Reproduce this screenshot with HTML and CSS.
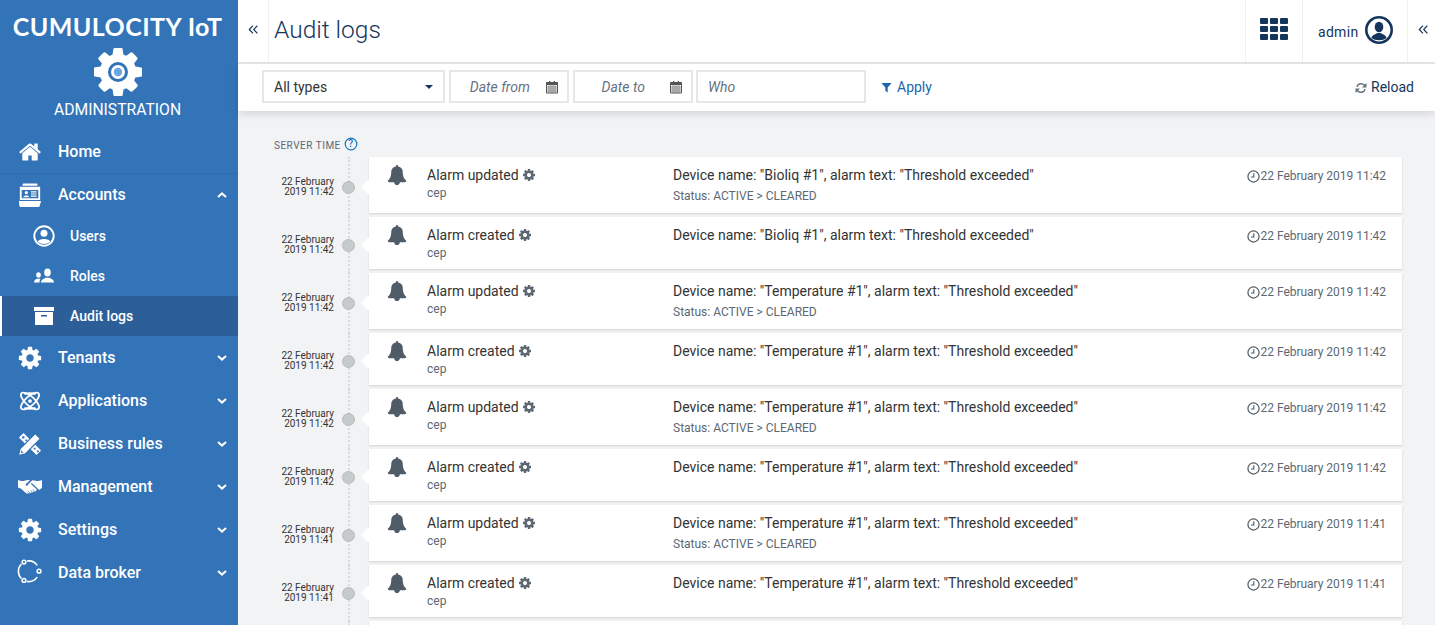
FILE: index.html
```html
<!DOCTYPE html>
<html lang="en">

<head>
    <meta charset="UTF-8">
    <title>Audit logs</title>
    <link rel="stylesheet" href="styles.css">
</head>

<body>
    <svg class="defs" width="0" height="0">
        <symbol id="i-cog" viewBox="0 0 1792 1792"><path d="M1152 896q0-106-75-181t-181-75-181 75-75 181 75 181 181 75 181-75 75-181zm512-109v222q0 12-8 23t-20 13l-185 28q-19 54-39 91 35 50 107 138 10 12 10 25t-9 23q-27 37-99 108t-94 71q-12 0-26-9l-138-108q-44 23-91 38-16 136-29 186-7 28-36 28h-222q-14 0-24.5-8.5t-11.5-21.5l-28-184q-49-16-90-37l-141 107q-10 9-25 9-14 0-25-11-126-114-165-168-7-10-7-23 0-12 8-23 15-21 51-66.5t54-70.5q-27-50-41-99l-183-27q-13-2-21-12.5t-8-23.5v-222q0-12 8-23t19-13l186-28q14-46 39-92-40-57-107-138-10-12-10-24 0-10 9-23 26-36 98.5-107.5t94.5-71.5q13 0 26 10l138 107q44-23 91-38 16-136 29-186 7-28 36-28h222q14 0 24.5 8.5t11.5 21.5l28 184q49 16 90 37l142-107q9-9 24-9 13 0 25 10 129 119 165 170 7 8 7 22 0 12-8 23-15 21-51 66.5t-54 70.5q26 50 41 98l183 28q13 2 21 12.5t8 23.5z"/></symbol>
        <symbol id="i-bell" viewBox="0 0 1792 1792"><path d="M1728 1408q0 52-38 90t-90 38h-448q0 106-75 181t-181 75-181-75-75-181h-448q-52 0-90-38t-38-90q50-42 91-88t85-119.5 74.5-158.5 50-206 19.5-260q0-152 117-282.5t307-158.5q-8-19-8-39 0-40 28-68t68-28 68 28 28 68q0 20-8 39 190 28 307 158.5t117 282.5q0 139 19.5 260t50 206 74.5 158.5 85 119.5 91 88z"/></symbol>
        <symbol id="i-home" viewBox="0 0 1792 1792"><path d="M1472 992v480q0 26-19 45t-45 19h-384v-384h-256v384h-384q-26 0-45-19t-19-45v-480q0-1 .5-3t.5-3l575-474 575 474q1 2 1 6zm223-69l-62 74q-8 9-21 11h-3q-13 0-21-7l-692-577-692 577q-12 8-24 7-13-2-21-11l-62-74q-8-10-7-23.5t11-21.5l719-599q32-26 76-26t76 26l244 204v-195q0-14 9-23t23-9h192q14 0 23 9t9 23v408l219 182q10 8 11 21.5t-7 23.5z"/></symbol>
        <symbol id="i-clock" viewBox="0 0 14 14"><circle cx="7" cy="7" r="6" fill="none" stroke="currentColor" stroke-width="1.300"/><path d="M7.300 3.400v4.100H4.400" fill="none" stroke="currentColor" stroke-width="1.200"/></symbol>
        <symbol id="i-cal" viewBox="0 0 14 14"><path d="M1.500 2.500h11v10.500h-11z" fill="none" stroke="currentColor"/><path d="M1.500 2.500h11v2.500h-11zM4 1h1.300v2.400H4zM8.700 1H10v2.400H8.700z"/><path d="M1.500 7h11M1.500 9h11M1.500 11h11M4 5v8M6 5v8M8 5v8M10 5v8" stroke="currentColor" stroke-width=".6" fill="none"/></symbol>
        <symbol id="i-down" viewBox="0 0 10 6"><path d="M1 1l4 3.600L9 1" fill="none" stroke="currentColor" stroke-width="2"/></symbol>
        <symbol id="i-dbl" viewBox="0 0 10 10"><path d="M4.500 1.500L1.200 5l3.300 3.500M8.500 1.500L5.200 5l3.300 3.500" fill="none" stroke="currentColor" stroke-width="1.100"/></symbol>
    </svg>

    <div class="app">
        <aside class="sidebar">
            <div class="brand">
                <div class="brand-name">CUMULOCITY IoT</div>
                <svg class="brand-cog" viewBox="0 0 48 48">
                    <use href="#i-cog" width="56" height="56" x="-4" y="-4" fill="#fff"/>
                    <circle cx="24" cy="24" r="10" fill="#3373b7"/>
                    <circle cx="24" cy="24" r="7" fill="#fff"/>
                    <circle cx="24" cy="24" r="4.200" fill="#6da6e2"/>
                </svg>
                <div class="brand-app">ADMINISTRATION</div>
            </div>
            <nav class="nav">
                <a class="nav-item">
                    <svg class="nav-icon"><use href="#i-home"/></svg>
                    <span class="nav-label">Home</span>
                </a>
                <a class="nav-item nav-item-line">
                    <svg class="nav-icon" viewBox="0 0 26 26"><path d="M5 1.500c0-.5.500-1 1-1h14c.5 0 1 .5 1 1V3H5z"/><path d="M2 4h22v14.500H2zM4 7.500v9h18v-9z" fill-rule="evenodd"/><circle cx="9" cy="10.500" r="1.700"/><path d="M5.800 15.500c0-2.600 6.400-2.600 6.400 0zM14 9h6v1.200h-6zM14 11.300h6v1.200h-6zM14 13.600h6v1.200h-6z"/><path d="M1 19.500h24l-1.500 5.500c0 .5-.5 1-1 1h-20c-.5 0-1-.5-1-1z"/></svg>
                    <span class="nav-label">Accounts</span>
                    <svg class="nav-arrow nav-arrow-up"><use href="#i-down"/></svg>
                </a>
                <a class="sub-item">
                    <svg class="sub-icon" viewBox="0 0 22 22"><circle cx="11" cy="11" r="9.700" fill="none" stroke="#fff" stroke-width="1.900"/><circle cx="11" cy="8.200" r="3.500"/><path d="M4.800 16.800c.6-3.600 11.800-3.600 12.400 0-3 3-9.400 3-12.400 0z"/></svg>
                    <span>Users</span>
                </a>
                <a class="sub-item">
                    <svg class="sub-icon" viewBox="0 0 22 22"><ellipse cx="14.500" cy="7.500" rx="3.300" ry="4"/><path d="M8 17.500c0-2.800 2.500-3.500 4.500-4.800h4c2 1.300 4.500 2 4.500 4.800z"/><ellipse cx="5.500" cy="10" rx="2.300" ry="2.800"/><path d="M1 17.500c0-2.200 1.500-3 3-3.800h3.500C6.800 14.500 6.500 16 6.500 17.500z"/></svg>
                    <span>Roles</span>
                </a>
                <a class="sub-item sub-item-active">
                    <svg class="sub-icon" viewBox="0 0 22 22"><path d="M1 2h20v4H1z"/><path d="M2 7h18v13H2zM8 10v1.500h6V10z" fill-rule="evenodd"/></svg>
                    <span>Audit logs</span>
                </a>
                <a class="nav-item">
                    <svg class="nav-icon nav-icon-cog"><use href="#i-cog"/></svg>
                    <span class="nav-label">Tenants</span>
                    <svg class="nav-arrow"><use href="#i-down"/></svg>
                </a>
                <a class="nav-item">
                    <svg class="nav-icon" viewBox="0 0 26 26"><g fill="none" stroke="#fff" stroke-width="1.900"><ellipse cx="13" cy="13" rx="12.500" ry="5" transform="rotate(42 13 13)"/><ellipse cx="13" cy="13" rx="12.500" ry="5" transform="rotate(-42 13 13)"/></g><path d="M7 20.500a12 8 0 0 0 12 0M7 5.500a12 8 0 0 1 12 0" fill="none" stroke="#fff" stroke-width="1.900"/><circle cx="13" cy="13" r="2"/></svg>
                    <span class="nav-label">Applications</span>
                    <svg class="nav-arrow"><use href="#i-down"/></svg>
                </a>
                <a class="nav-item">
                    <svg class="nav-icon" viewBox="0 0 26 26"><path d="M1 6l5-5 6.500 6.500-5 5zM13.500 18.500l5-5 6.500 6.500-5 5z"/><path d="M4.500 4.500h2.500V7H4.500zM8 8h2v2H8zM17 17h2v2h-2zM20.500 20h2v2h-2z" fill="#3373b7"/><path d="M.5 25.500l1.800-7.300L18.700 1.800l5.500 5.500L7.800 23.700z" stroke="#3373b7" stroke-width="1.200"/><path d="M3 22.800l.7-3 2.300 2.300z" fill="#3373b7"/></svg>
                    <span class="nav-label">Business rules</span>
                    <svg class="nav-arrow"><use href="#i-down"/></svg>
                </a>
                <a class="nav-item">
                    <svg class="nav-icon" viewBox="0 0 26 22"><path d="M0 3.500c3 1 5 1.500 7 .8 2-.8 4-1.300 6-.5l-4.500 4c-1 1.200.8 2.500 2 1.700l3-2.200 7 6.500-1 1.500c-.8.900-2 .9-2.600.3-.3 1.200-1.600 1.700-2.600 1-.4 1.100-1.700 1.500-2.700.8-.7.800-2 .9-3 .1L3 12.500 0 11.500z"/><path d="M26 3.500c-3 1-5 1.500-7 .8-1.500-.6-2.500-.8-3.500-.7L10 9c.5.600 1.500.3 2-.2l3-2 8 7.500 3-2.500z"/><path d="M11 15.500l2 2M13.500 14.500l2.500 2.500M16 13.500l2.500 2.500" stroke="#3373b7" stroke-width=".8" fill="none"/></svg>
                    <span class="nav-label">Management</span>
                    <svg class="nav-arrow"><use href="#i-down"/></svg>
                </a>
                <a class="nav-item">
                    <svg class="nav-icon nav-icon-cog"><use href="#i-cog"/></svg>
                    <span class="nav-label">Settings</span>
                    <svg class="nav-arrow"><use href="#i-down"/></svg>
                </a>
                <a class="nav-item">
                    <svg class="nav-icon nav-icon-open" viewBox="0 0 26 26"><g fill="none" stroke="#fff" stroke-width="1.700"><path d="M9.700 .1A11.200 11.200 0 0 1 20.800 4.700M20.800 17.500A11.200 11.200 0 0 1 9.700 22.100M3.700 19A11.200 11.200 0 0 1 3.700 3.200"/><circle cx="6.500" cy="1.200" r="2"/><circle cx="22.800" cy="11" r="2"/><circle cx="6.500" cy="21" r="2"/></g></svg>
                    <span class="nav-label">Data broker</span>
                    <svg class="nav-arrow"><use href="#i-down"/></svg>
                </a>
            </nav>
        </aside>

        <main class="main">
            <header class="topbar">
                <div class="collapse-left"><svg class="dbl"><use href="#i-dbl"/></svg></div>
                <h1 class="title">Audit logs</h1>
                <div class="apps-cell">
                    <svg class="apps" viewBox="0 0 28 22">
                        <rect x="0" y="0" width="8" height="6" rx="1"/><rect x="10" y="0" width="8" height="6" rx="1"/><rect x="20" y="0" width="8" height="6" rx="1"/>
                        <rect x="0" y="8" width="8" height="6" rx="1"/><rect x="10" y="8" width="8" height="6" rx="1"/><rect x="20" y="8" width="8" height="6" rx="1"/>
                        <rect x="0" y="16" width="8" height="6" rx="1"/><rect x="10" y="16" width="8" height="6" rx="1"/><rect x="20" y="16" width="8" height="6" rx="1"/>
                    </svg>
                </div>
                <div class="user-cell">
                    <span class="user-name">admin</span>
                    <svg class="avatar" viewBox="0 0 28 28"><circle cx="14" cy="14" r="12.700" fill="none" stroke="#14365c" stroke-width="2.600"/><ellipse cx="14" cy="11" rx="4.300" ry="5.300" fill="#14365c"/><path d="M6.500 22c.5-3.500 4.500-3.500 5.500-5h4c1 1.500 5 1.500 5.500 5-3.500 3-11.500 3-15 0z" fill="#14365c"/></svg>
                </div>
                <div class="collapse-right"><svg class="dbl"><use href="#i-dbl"/></svg></div>
            </header>

            <div class="filters">
                <div class="field field-select">
                    <span class="select-value">All types</span>
                    <span class="caret"></span>
                </div>
                <div class="field field-date">
                    <span class="placeholder">Date from</span>
                    <svg class="cal"><use href="#i-cal"/></svg>
                </div>
                <div class="field field-date">
                    <span class="placeholder">Date to</span>
                    <svg class="cal"><use href="#i-cal"/></svg>
                </div>
                <div class="field field-who"><span class="placeholder">Who</span></div>
                <a class="apply">
                    <svg class="apply-icon" viewBox="0 0 12 12"><path d="M.5 1h11L7.300 6v5.500L4.700 9.500V6z"/></svg>
                    Apply
                </a>
                <a class="reload">
                    <svg class="reload-icon" viewBox="0 0 14 14"><path d="M2.200 5.800A5 5 0 0 1 10.800 3.600L12.500 2v4.500H8l1.800-1.800A3.500 3.500 0 0 0 3.700 6zM11.800 8.200A5 5 0 0 1 3.200 10.400L1.500 12V7.500H6L4.200 9.300A3.500 3.500 0 0 0 10.300 8z"/></svg>
                    Reload
                </a>
            </div>

            <section class="content">
                <div class="server-time">
                    Server time
                    <svg class="help" viewBox="0 0 14 14"><circle cx="7" cy="7" r="5.800" fill="none" stroke="#1776bf" stroke-width="1.200"/><text x="7" y="10" text-anchor="middle" class="help-mark">?</text></svg>
                </div>

                <div class="row">
                    <div class="stamp">22 February<br>2019 11:42</div>
                    <div class="dot"></div>
                    <div class="card">
                        <svg class="bell"><use href="#i-bell"/></svg>
                        <div class="who-col">
                            <div class="action">Alarm updated <svg class="mini-cog"><use href="#i-cog"/></svg></div>
                            <div class="user">cep</div>
                        </div>
                        <div class="msg-col">
                            <div class="msg">Device name: "Bioliq #1", alarm text: "Threshold exceeded"</div>
                            <div class="status">Status: ACTIVE &gt; CLEARED</div>
                        </div>
                        <div class="when"><svg class="clock"><use href="#i-clock"/></svg>22 February 2019 11:42</div>
                    </div>
                </div>

                <div class="row">
                    <div class="stamp">22 February<br>2019 11:42</div>
                    <div class="dot"></div>
                    <div class="card">
                        <svg class="bell"><use href="#i-bell"/></svg>
                        <div class="who-col">
                            <div class="action">Alarm created <svg class="mini-cog"><use href="#i-cog"/></svg></div>
                            <div class="user">cep</div>
                        </div>
                        <div class="msg-col">
                            <div class="msg">Device name: "Bioliq #1", alarm text: "Threshold exceeded"</div>
                        </div>
                        <div class="when"><svg class="clock"><use href="#i-clock"/></svg>22 February 2019 11:42</div>
                    </div>
                </div>

                <div class="row">
                    <div class="stamp">22 February<br>2019 11:42</div>
                    <div class="dot"></div>
                    <div class="card">
                        <svg class="bell"><use href="#i-bell"/></svg>
                        <div class="who-col">
                            <div class="action">Alarm updated <svg class="mini-cog"><use href="#i-cog"/></svg></div>
                            <div class="user">cep</div>
                        </div>
                        <div class="msg-col">
                            <div class="msg">Device name: "Temperature #1", alarm text: "Threshold exceeded"</div>
                            <div class="status">Status: ACTIVE &gt; CLEARED</div>
                        </div>
                        <div class="when"><svg class="clock"><use href="#i-clock"/></svg>22 February 2019 11:42</div>
                    </div>
                </div>

                <div class="row">
                    <div class="stamp">22 February<br>2019 11:42</div>
                    <div class="dot"></div>
                    <div class="card">
                        <svg class="bell"><use href="#i-bell"/></svg>
                        <div class="who-col">
                            <div class="action">Alarm created <svg class="mini-cog"><use href="#i-cog"/></svg></div>
                            <div class="user">cep</div>
                        </div>
                        <div class="msg-col">
                            <div class="msg">Device name: "Temperature #1", alarm text: "Threshold exceeded"</div>
                        </div>
                        <div class="when"><svg class="clock"><use href="#i-clock"/></svg>22 February 2019 11:42</div>
                    </div>
                </div>

                <div class="row">
                    <div class="stamp">22 February<br>2019 11:42</div>
                    <div class="dot"></div>
                    <div class="card">
                        <svg class="bell"><use href="#i-bell"/></svg>
                        <div class="who-col">
                            <div class="action">Alarm updated <svg class="mini-cog"><use href="#i-cog"/></svg></div>
                            <div class="user">cep</div>
                        </div>
                        <div class="msg-col">
                            <div class="msg">Device name: "Temperature #1", alarm text: "Threshold exceeded"</div>
                            <div class="status">Status: ACTIVE &gt; CLEARED</div>
                        </div>
                        <div class="when"><svg class="clock"><use href="#i-clock"/></svg>22 February 2019 11:42</div>
                    </div>
                </div>

                <div class="row">
                    <div class="stamp">22 February<br>2019 11:42</div>
                    <div class="dot"></div>
                    <div class="card">
                        <svg class="bell"><use href="#i-bell"/></svg>
                        <div class="who-col">
                            <div class="action">Alarm created <svg class="mini-cog"><use href="#i-cog"/></svg></div>
                            <div class="user">cep</div>
                        </div>
                        <div class="msg-col">
                            <div class="msg">Device name: "Temperature #1", alarm text: "Threshold exceeded"</div>
                        </div>
                        <div class="when"><svg class="clock"><use href="#i-clock"/></svg>22 February 2019 11:42</div>
                    </div>
                </div>

                <div class="row">
                    <div class="stamp">22 February<br>2019 11:41</div>
                    <div class="dot"></div>
                    <div class="card">
                        <svg class="bell"><use href="#i-bell"/></svg>
                        <div class="who-col">
                            <div class="action">Alarm updated <svg class="mini-cog"><use href="#i-cog"/></svg></div>
                            <div class="user">cep</div>
                        </div>
                        <div class="msg-col">
                            <div class="msg">Device name: "Temperature #1", alarm text: "Threshold exceeded"</div>
                            <div class="status">Status: ACTIVE &gt; CLEARED</div>
                        </div>
                        <div class="when"><svg class="clock"><use href="#i-clock"/></svg>22 February 2019 11:41</div>
                    </div>
                </div>

                <div class="row">
                    <div class="stamp">22 February<br>2019 11:41</div>
                    <div class="dot"></div>
                    <div class="card">
                        <svg class="bell"><use href="#i-bell"/></svg>
                        <div class="who-col">
                            <div class="action">Alarm created <svg class="mini-cog"><use href="#i-cog"/></svg></div>
                            <div class="user">cep</div>
                        </div>
                        <div class="msg-col">
                            <div class="msg">Device name: "Temperature #1", alarm text: "Threshold exceeded"</div>
                        </div>
                        <div class="when"><svg class="clock"><use href="#i-clock"/></svg>22 February 2019 11:41</div>
                    </div>
                </div>

                <div class="row">
                    <div class="stamp"></div>
                    <div class="dot dot-hidden"></div>
                    <div class="card"></div>
                </div>
            </section>
        </main>
    </div>
</body>

</html>
```

FILE: styles.css
```css
* {
    box-sizing: border-box;
}

html,
body {
    margin: 0;
    height: 100%;
    overflow: hidden;
}

body {
    font-family: Roboto, "Liberation Sans", sans-serif;
    font-size: 14px;
    color: #333;
    background: #f2f3f5;
}

.defs {
    position: absolute;
}

.app {
    display: flex;
    height: 625px;
}

/* sidebar */
.sidebar {
    width: 238px;
    flex: none;
    background: #3373b7;
    color: #fff;
}

.brand {
    height: 130px;
    padding: 13px 3px 0 0;
    display: flex;
    flex-direction: column;
    align-items: center;
}

.brand-name {
    font-family: Lato, sans-serif;
    font-weight: 700;
    font-size: 25px;
    line-height: 27px;
    white-space: nowrap;
    letter-spacing: .45px;
}

.brand-cog {
    width: 48px;
    height: 48px;
    margin-top: 8px;
}

.brand-app {
    font-size: 15.7px;
    line-height: 20px;
    margin-top: 4px;
}

.nav-item {
    height: 43px;
    display: flex;
    align-items: center;
    padding-left: 18px;
}

.nav-item-line {
    box-shadow: inset 0 1px 0 #2f6cad;
}

.nav-icon {
    width: 24px;
    height: 24px;
    fill: #fff;
    flex: none;
}

.nav-icon-cog {
    width: 26px;
    height: 26px;
    margin: 0 -1px;
}

.nav-icon-open {
    overflow: visible;
}

.nav-label {
    margin-left: 16px;
    font-size: 16px;
    font-weight: 500;
    flex: 1;
}

.nav-arrow {
    width: 10px;
    height: 6px;
    margin-right: 11px;
    color: #fff;
}

.nav-arrow-up {
    transform: rotate(180deg);
}

.sub-item {
    height: 40px;
    display: flex;
    align-items: center;
    gap: 15px;
    padding-left: 33px;
    font-size: 14px;
    font-weight: 500;
}

.sub-icon {
    width: 22px;
    height: 22px;
    fill: #fff;
    flex: none;
}

.sub-item-active {
    background: #2c5f98;
    border-left: 2px solid #fff;
    padding-left: 31px;
}

/* header */
.main {
    flex: 1;
    min-width: 0;
    display: flex;
    flex-direction: column;
}

.topbar {
    height: 64px;
    flex: none;
    background: #fff;
    border-bottom: 2px solid #e6e7e9;
    display: flex;
    align-items: stretch;
    color: #14365c;
}

.collapse-left {
    width: 31px;
    border-right: 1px solid #f1f1f1;
    display: flex;
    align-items: center;
    padding: 0 0 3px 10px;
}

.dbl {
    width: 11px;
    height: 11px;
}

.title {
    margin: 0 0 0 5px;
    flex: 1;
    font-size: 24.5px;
    font-weight: 300;
    line-height: 60px;
}

.apps-cell {
    width: 58px;
    border-left: 1px solid #f1f1f1;
    border-right: 1px solid #f1f1f1;
    display: flex;
    align-items: center;
    justify-content: center;
    padding-bottom: 4px;
}

.apps {
    width: 28px;
    height: 22px;
    fill: #14365c;
}

.user-cell {
    width: 105px;
    display: flex;
    align-items: center;
    padding: 0 0 3px 15px;
    gap: 8px;
    font-size: 14px;
    letter-spacing: .3px;
    border-right: 1px solid #f1f1f1;
}

.user-name {
    margin-top: 5px;
}

.avatar {
    width: 28px;
    height: 28px;
    margin-left: -1px;
}

.collapse-right {
    width: 27px;
    display: flex;
    align-items: center;
    padding: 0 0 3px 10px;
}

/* filter bar */
.filters {
    height: 47px;
    flex: none;
    background: #fff;
    display: flex;
    align-items: flex-start;
    padding: 6px 21px 0 24px;
    box-shadow: 0 3px 8px rgba(0, 0, 0, .12);
    position: relative;
}

.field {
    height: 33px;
    border: 2px solid #e6e7e9;
    display: flex;
    align-items: center;
    color: #333;
}

.field-select {
    width: 183px;
    padding: 0 10px;
    margin-right: 4px;
    justify-content: space-between;
}

.caret {
    border-left: 4px solid transparent;
    border-right: 4px solid transparent;
    border-top: 4px solid #14365c;
}

.field-date {
    width: 120px;
    padding: 0 8px 0 0;
    margin-right: 4px;
    justify-content: flex-end;
}

.field-date + .field-who {
    margin-left: -1px;
}

.field-who {
    width: 170px;
    padding: 0 10px;
}

.placeholder {
    font-style: italic;
    color: #66727f;
}

.cal {
    width: 14px;
    height: 14px;
    margin-left: 15px;
    color: #555;
    fill: #555;
}

.field-date:nth-child(3) .cal {
    margin-left: 24px;
}

.apply {
    margin: 1px 0 0 15px;
    line-height: 33px;
    color: #1b67ad;
    display: flex;
    align-items: center;
    gap: 5px;
}

.apply-icon {
    width: 11px;
    height: 11px;
    fill: #1b67ad;
}

.reload {
    margin: 1px 0 0 auto;
    line-height: 33px;
    color: #14365c;
    display: flex;
    align-items: center;
    gap: 3px;
}

.reload-icon {
    width: 14px;
    height: 14px;
    fill: #66727f;
}

/* timeline */
.content {
    flex: 1;
    overflow: hidden;
    padding: 26px 33px 0 36px;
}

.server-time {
    height: 20px;
    font-size: 10px;
    text-transform: uppercase;
    letter-spacing: .5px;
    color: #5d6872;
    display: flex;
    align-items: flex-start;
    gap: 3px;
    line-height: 18px;
}

.help {
    width: 14px;
    height: 14px;
}

.help-mark {
    font-size: 10px;
    font-weight: 500;
    fill: #1776bf;
}

.row {
    display: flex;
    align-items: center;
    margin-bottom: 4px;
    position: relative;
}

/* dotted line behind the dots */
.row::before {
    content: "";
    position: absolute;
    left: 74px;
    top: 0;
    bottom: -4px;
    border-left: 2px dotted #d8dadd;
}

.stamp {
    width: 60px;
    flex: none;
    font-size: 10px;
    line-height: 10px;
    text-align: right;
    color: #333;
    margin-top: 4px;
}

.dot {
    width: 13px;
    height: 13px;
    flex: none;
    margin: 4px 14px 0 8px;
    border-radius: 50%;
    background: #c5cacb;
    border: 1px solid #b6bbbc;
    position: relative;
}

.dot-hidden {
    visibility: hidden;
}

.card {
    flex: 1;
    min-height: 52px;
    background: #fff;
    box-shadow: 0 1px 2px rgba(0, 0, 0, .14);
    display: flex;
    align-items: flex-start;
    padding: 8px 16px 8px 18px;
    position: relative;
}

/* little notch pointing at the dot */
.card::before {
    content: "";
    position: absolute;
    left: -8px;
    top: calc(50% + 2px);
    margin-top: -8px;
    border-top: 8px solid transparent;
    border-bottom: 8px solid transparent;
    border-right: 8px solid #fff;
}

.bell {
    width: 20px;
    height: 20px;
    fill: #4f5b66;
    flex: none;
    margin-right: 20px;
}

.who-col {
    width: 246px;
    flex: none;
}

.action {
    line-height: 20px;
    color: #333;
    display: flex;
    align-items: center;
    gap: 3px;
}

.mini-cog {
    width: 14px;
    height: 14px;
    fill: #5d6872;
}

.user {
    font-size: 12px;
    line-height: 16px;
    color: #5d6872;
}

.msg-col {
    flex: 1;
}

.msg {
    line-height: 20px;
    color: #333;
}

.status {
    font-size: 12px;
    line-height: 16px;
    margin: 3px 0 1px;
    color: #5d6872;
}

.when {
    font-size: 12px;
    line-height: 20px;
    margin-top: 1px;
    letter-spacing: -.02px;
    color: #5d6872;
    display: flex;
    align-items: center;
}

.clock {
    width: 13px;
    height: 13px;
    color: #4f5b66;
}
```
